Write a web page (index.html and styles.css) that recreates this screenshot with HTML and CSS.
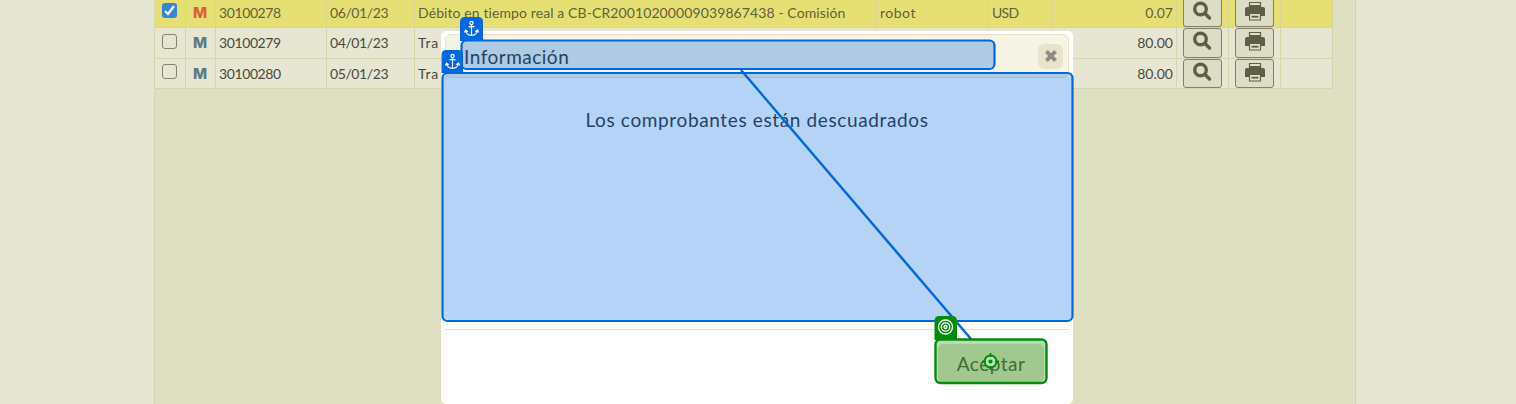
FILE: index.html
```html
<!DOCTYPE html>
<html lang="es">
<head>
<meta charset="utf-8">
<title>Comprobantes</title>
<link rel="stylesheet" href="styles.css">
</head>
<body>
<svg class="defs" width="0" height="0">
  <symbol id="check" viewBox="0 0 15 15"><path d="M3 8l3 3 6-8" fill="none" stroke="#f2f2e4" stroke-width="2.3"/></symbol>
  <symbol id="search" viewBox="0 0 20 20"><circle cx="7.500" cy="8" r="5.800" fill="none" stroke="#5f5d45" stroke-width="3.4"/><path d="M12 12.500l4.500 4.500" stroke="#5f5d45" stroke-width="3.4" stroke-linecap="round"/></symbol>
  <symbol id="print" viewBox="0 0 20 20"><path d="M4.500 7V1.500h11V7z" fill="#dfdfc8" stroke="#5f5d45" stroke-width="1.2"/><path d="M4.500 4h11v3h-11zM2 6h2v1h12V6h2q2 0 2 2v7h-4v-2.500H4V15H0V8q0-2 2-2z" fill="#5f5d45"/><path d="M4.500 12.500h11v6.500h-11z" fill="#dfdfc8" stroke="#5f5d45" stroke-width="1.1"/><path d="M6.500 15.700h7" stroke="#5f5d45" stroke-width="1.800"/></symbol>
  <symbol id="anchor" viewBox="0 0 16 16"><g fill="none" stroke="#fff" stroke-width="1.2"><circle cx="8" cy="2.4" r="1.6"/><path d="M8 4v11M5 6.2h6M2 9.5q.5 5 6 5.4 5.500-.4 6-5.400M1 12l1-2.500 2.200 1.700M15 12l-1-2.500-2.200 1.700"/></g></symbol>
</svg>
<main class="page">
  <div class="grid">
    <div class="row selected">
      <div class="cell pick"><span class="box on"><svg width="15" height="15"><use href="#check"/></svg></span></div><div class="cell mark">M</div><div class="cell num">30100278</div><div class="cell date">06/01/23</div><div class="cell desc">Débito en tiempo real a CB-CR20010200009039867438 - Comisión</div><div class="cell user">robot</div><div class="cell cur">USD</div><div class="cell amount">0.07</div><div class="cell act"><button class="btn"><svg width="20" height="20"><use href="#search"/></svg></button></div><div class="cell act"><button class="btn"><svg width="20" height="20"><use href="#print"/></svg></button></div><div class="cell"></div>
    </div>
    <div class="row middle">
      <div class="cell pick"><span class="box"></span></div><div class="cell mark">M</div><div class="cell num">30100279</div><div class="cell date">04/01/23</div><div class="cell short">Tra</div><div class="cell"></div><div class="cell"></div><div class="cell amount">80.00</div><div class="cell act"><button class="btn"><svg width="20" height="20"><use href="#search"/></svg></button></div><div class="cell act"><button class="btn"><svg width="20" height="20"><use href="#print"/></svg></button></div><div class="cell"></div>
    </div>
    <div class="row last">
      <div class="cell pick"><span class="box"></span></div><div class="cell mark">M</div><div class="cell num">30100280</div><div class="cell date">05/01/23</div><div class="cell short">Tra</div><div class="cell"></div><div class="cell"></div><div class="cell amount">80.00</div><div class="cell act"><button class="btn"><svg width="20" height="20"><use href="#search"/></svg></button></div><div class="cell act"><button class="btn"><svg width="20" height="20"><use href="#print"/></svg></button></div><div class="cell"></div>
    </div>
  </div>
</main>
<section class="dialog">
  <header class="titlebar"><span class="title">Información</span><button class="close"><svg width="16" height="16" viewBox="0 0 14 14"><path d="M3 3l8 8M11 3l-8 8" stroke="#8e8c84" stroke-width="3.500"/></svg></button></header>
  <div class="content"><span class="message">Los comprobantes están descuadrados</span></div>
  <footer class="actions"><button class="accept"><span class="label">Aceptar</span></button></footer>
</section>
<svg class="overlay" width="1516" height="404">
  <g fill="#0068e0" fill-opacity=".29" stroke="#0068e0" stroke-width="2.2">
    <rect x="461.500" y="40.500" width="533" height="28.500" rx="5"/>
    <rect x="442.500" y="73" width="630" height="248" rx="5"/>
  </g>
  <path d="M741 70L971 339" stroke="#0068e0" stroke-width="2.500"/>
  <path d="M460 41V22q0-5 5-5h13q5 0 5 5v19z" fill="#0068e0"/>
  <path d="M441.500 73V55q0-5 5-5H458q5 0 5 5v18z" fill="#0068e0"/>
  <use href="#anchor" x="463.500" y="20.500" width="16" height="16"/>
  <use href="#anchor" x="444.500" y="53.500" width="16" height="16"/>
  <rect x="935.500" y="339.500" width="111" height="43.500" rx="5" fill="#048c0c" fill-opacity=".3" stroke="#048c0c" stroke-width="2.400"/>
  <path d="M934.500 340V321q0-5 5-5H952q5 0 5 5v19z" fill="#048c0c"/>
  <g fill="none" stroke="#fff" stroke-width="1.300"><circle cx="945.500" cy="327" r="7"/><circle cx="945.500" cy="327" r="4.200"/><circle cx="945.500" cy="327" r="1.500"/></g>
  <g stroke="#048c0c" stroke-width="1.800"><circle cx="990.500" cy="361.500" r="6" fill="#b9deb9"/><path d="M990.500 353v4M990.500 366v4M982 361.500h4M995 361.500h4"/><circle cx="990.500" cy="361.500" r="1.200" fill="#048c0c"/></g>
</svg>
</body>
</html>
```
FILE: styles.css
```css
* { box-sizing: border-box; }
body { margin: 0; height: 404px; overflow: hidden; background: #e6e6d2; font-family: Lato, sans-serif; font-size: 14px; color: #4a4a40; }
button { padding: 0; font: inherit; color: inherit; }
.defs { position: absolute; }
.page { width: 1202px; height: 404px; margin-left: 154px; background: #dfdfc1; border: solid #d5d5b0; border-width: 0 1px; }
.grid { width: 1178px; }
.row { display: grid; grid-template-columns: 31px 30px 111px 88px 462px 111px 65px 124px 52px 52px 52px; height: 31px; background: #e6e6d2; }
.row.selected { height: 28px; background: #e6e074; color: #62603c; }
.row.last { height: 30px; }
.cell { border: solid #d5d5ae; border-width: 0 1px 1px 0; padding-left: 3px; line-height: 30px; white-space: nowrap; overflow: hidden; }
.selected .cell { line-height: 26px; border-color: #dbd596; }
.pick { padding: 6px 0 0 7px; }
.selected .pick { padding-top: 3px; }
.last .pick { padding-top: 5px; }
.box { display: block; width: 15px; height: 15px; border: 1.500px solid #85836f; border-radius: 3px; }
.box.on { border: 0; background: #3585d8; }
.box svg { display: block; }
.mark { padding-left: 7px; color: #5c7b7c; font-family: Inter, sans-serif; font-weight: 800; font-size: 15px; }
.selected .mark { color: #dd6038; }
.num { letter-spacing: -.4px; padding-left: 3px; }
.date { letter-spacing: -.4px; }
.desc { letter-spacing: .1px; }
.short { letter-spacing: .8px; }
.user { letter-spacing: .5px; }
.cur { letter-spacing: -.7px; padding-left: 4px; }
.amount { text-align: right; padding-right: 3px; }
.act { padding: 0 0 0 6px; line-height: 0; }
.btn { display: flex; justify-content: center; align-items: center; width: 39px; height: 30px; padding-bottom: 4px; border: 1px solid #828069; border-radius: 3px; background: #dcdcc7; }
.selected .btn { height: 27px; border-top: 0; border-radius: 0 0 3px 3px; padding-bottom: 5px; }
.last .btn { height: 29px; }
.dialog { position: absolute; left: 441px; top: 31px; width: 632px; height: 373px; padding: 3px 4px; background: #fff; border-radius: 5px; display: flex; flex-direction: column; }
.titlebar { flex: none; display: flex; justify-content: space-between; align-items: center; height: 44px; padding: 0 5px 0 18px; border: 1px solid #e8e3c8; border-radius: 6px; background: #f6f4e5; color: #33332f; }
.title { font-size: 19px; letter-spacing: .5px; }
.close { display: flex; align-items: center; justify-content: center; width: 25px; height: 25px; border: 0; border-radius: 6px; background: #e8e4cb; }
.content { flex: none; height: 251px; padding-top: 30px; text-align: center; font-size: 19px; line-height: 24px; letter-spacing: .63px; color: #333; }
.actions { flex: none; border-top: 1px solid #e5e3d2; height: 74px; padding: 14px 25px 0 0; display: flex; justify-content: flex-end; }
.accept { width: 106px; height: 38px; border: 0; border-radius: 5px; background: #e4e2c8; color: #5f5d48; font-size: 19px; letter-spacing: .5px; }
.overlay { position: absolute; left: 0; top: 0; }
```
